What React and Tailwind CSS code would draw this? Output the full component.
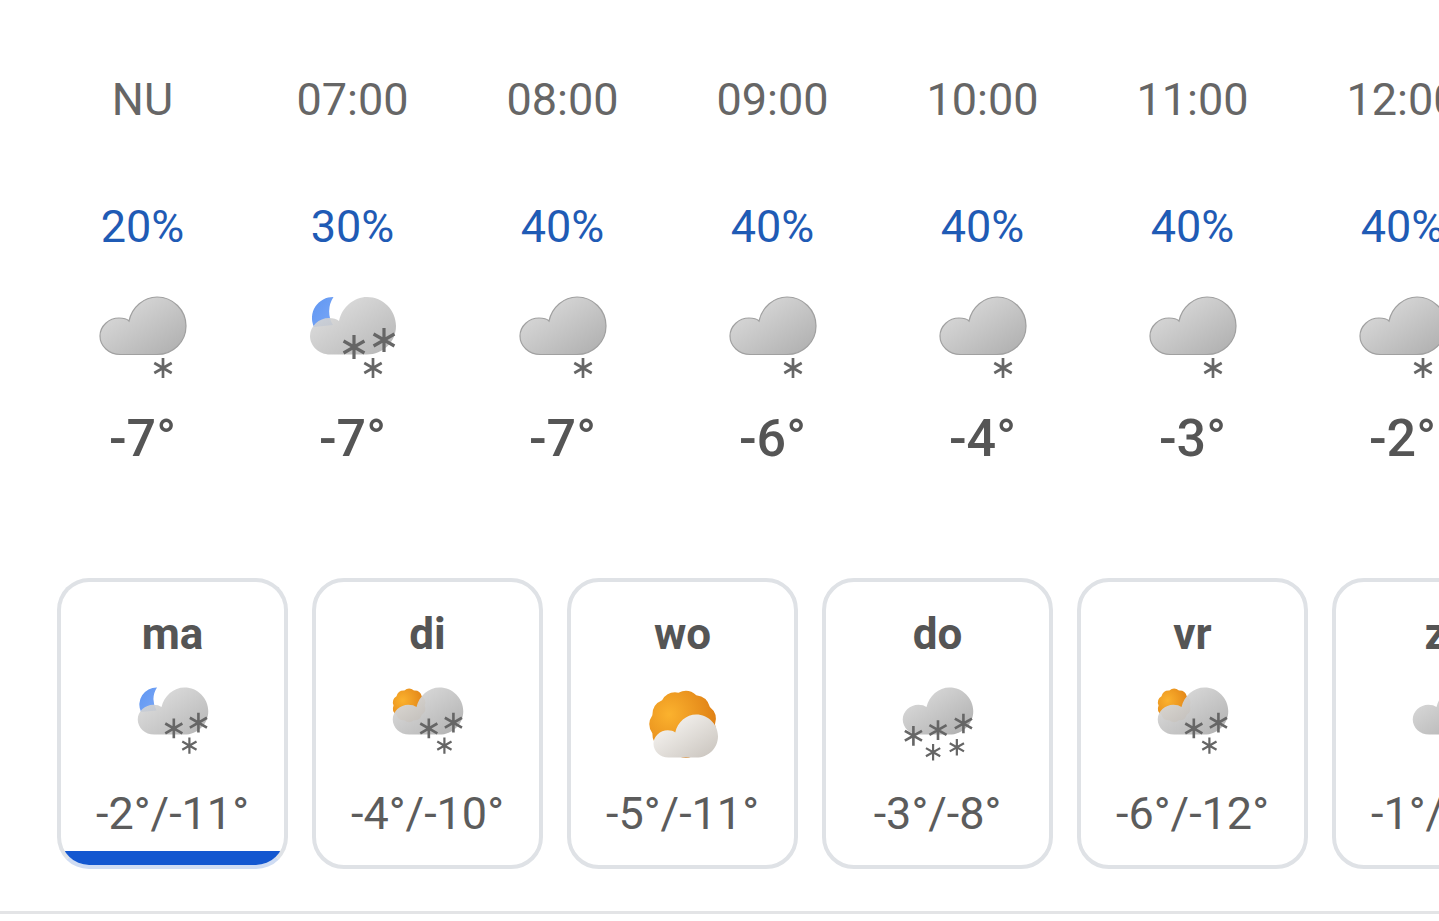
import { useId } from 'react'

const hours = [
  { time: 'NU', rain: '20%', icon: 'snow', temp: '-7°' },
  { time: '07:00', rain: '30%', icon: 'moon', temp: '-7°' },
  { time: '08:00', rain: '40%', icon: 'snow', temp: '-7°' },
  { time: '09:00', rain: '40%', icon: 'snow', temp: '-6°' },
  { time: '10:00', rain: '40%', icon: 'snow', temp: '-4°' },
  { time: '11:00', rain: '40%', icon: 'snow', temp: '-3°' },
  { time: '12:00', rain: '40%', icon: 'snow', temp: '-2°' },
]

const days = [
  { day: 'ma', icon: 'moon', range: '-2°/-11°', active: true },
  { day: 'di', icon: 'sun', range: '-4°/-10°' },
  { day: 'wo', icon: 'clear', range: '-5°/-11°' },
  { day: 'do', icon: 'heavy', range: '-3°/-8°' },
  { day: 'vr', icon: 'sun', range: '-6°/-12°' },
  { day: 'za', icon: 'snow', range: '-1°/-10°' },
]

const CLOUD = 'M20 57.5C9 57.5 0 49 0 39C0 29 9 21 19 21C23 21 27 22 29 24C32 10 44 0 57 0C73 0 86 13 86 29C86 45 73 57.5 57 57.5Z'

const flakes = {
  snow: [[70, 75, 10]],
  moon: [[51, 54, 12], [81, 47, 12], [70, 75, 10]],
  sun: [[51, 54, 12], [81, 47, 12], [70, 75, 10]],
  heavy: [[20, 63, 12], [50, 56, 12], [81, 48, 12], [44, 83, 10], [73, 77, 10]],
  clear: [],
}

// bumpy disc for the sun
function sunPath(cx, cy, r, bump, n) {
  let d = ''
  for (let i = 0; i < n; i++) {
    const a = (i / n) * Math.PI * 2
    const b = ((i + 1) / n) * Math.PI * 2
    const m = (a + b) / 2
    const p = (t, rad) => `${(cx + Math.cos(t) * rad).toFixed(1)} ${(cy + Math.sin(t) * rad).toFixed(1)}`
    if (i === 0) d += `M${p(a, r)}`
    d += `Q${p(m, r + bump)} ${p(b, r)}`
  }
  return d + 'Z'
}

function Flake({ x, y, r }) {
  const dx = r * 0.87
  const dy = r * 0.5
  return (
    <path
      d={`M${x} ${y - r}V${y + r}M${x - dx} ${y - dy}L${x + dx} ${y + dy}M${x + dx} ${y - dy}L${x - dx} ${y + dy}`}
      stroke="#666666"
      strokeWidth={r > 10 ? 3.2 : 2.7}
      fill="none"
    />
  )
}

function WeatherIcon({ kind, outline, className }) {
  const id = useId()
  return (
    <svg viewBox="0 0 100 96" className={className}>
      <defs>
        <linearGradient id={`${id}c`} x1="0.1" y1="0.1" x2="0.9" y2="0.9">
          <stop offset="0" stopColor="#dcdcdc" />
          <stop offset="1" stopColor="#b2b2b2" />
        </linearGradient>
        <linearGradient id={`${id}w`} x1="0.1" y1="0.1" x2="0.9" y2="0.9">
          <stop offset="0" stopColor="#f8f6f3" />
          <stop offset="1" stopColor="#cdc8c2" />
        </linearGradient>
        <linearGradient id={`${id}m`} x1="0" y1="0" x2="1" y2="1">
          <stop offset="0" stopColor="#5f96f2" />
          <stop offset="1" stopColor="#7aa7f6" />
        </linearGradient>
        <radialGradient id={`${id}s`} cx="0.3" cy="0.35" r="0.8">
          <stop offset="0" stopColor="#fbb22e" />
          <stop offset="1" stopColor="#dc7a12" />
        </radialGradient>
      </defs>
      {kind === 'clear' ? (
        <>
          <path d={sunPath(50, 49, 39, 6, 11)} fill={`url(#${id}s)`} />
          <path d={CLOUD} transform="translate(14 37) scale(0.915)" fill={`url(#${id}w)`} />
        </>
      ) : (
        <>
          {kind === 'moon' && (
            <path d="M30.5 4A21 21 0 0 0 11 34L30 32A26 26 0 0 1 30.5 4Z" fill={`url(#${id}m)`} />
          )}
          {kind === 'sun' && <path d={sunPath(27, 26, 19, 4, 10)} fill={`url(#${id}s)`} />}
          <path
            d={CLOUD}
            transform="translate(7 4)"
            fill={`url(#${id}c)`}
            fillOpacity={kind === 'moon' ? 0.9 : kind === 'sun' ? 0.96 : 1}
            stroke={outline ? '#a0a0a0' : 'none'}
            strokeWidth="1.2"
          />
        </>
      )}
      {flakes[kind].map(([x, y, r]) => (
        <Flake key={`${x}-${y}`} x={x} y={y} r={r} />
      ))}
    </svg>
  )
}

function HourColumn({ hour }) {
  return (
    <div className="flex w-[210px] shrink-0 flex-col items-center">
      <div className="text-[45px] leading-[52px] text-[#666666]">{hour.time}</div>
      <div className="mt-[75px] text-[45px] leading-[52px] text-[#1f5bb5]">{hour.rain}</div>
      <WeatherIcon
        kind={hour.icon}
        outline={hour.icon === 'snow'}
        className="mt-[40px] h-[96px] w-[100px]"
      />
      <div className="mt-[22px] text-[52px] leading-[56px] font-medium text-[#555555]">{hour.temp}</div>
    </div>
  )
}

function DayCard({ day }) {
  return (
    <div
      className={`relative h-[291px] w-[231px] shrink-0 overflow-hidden rounded-[32px] border-4 ${
        day.active ? 'border-[#dfe2e6] border-b-[#cfdcf3]' : 'border-[#dfe2e6]'
      }`}
    >
      <div className="flex flex-col items-center pt-[26px]">
        <div className="text-[44px] leading-[52px] font-bold text-[#555555]">{day.day}</div>
        <WeatherIcon kind={day.icon} className="mt-[24px] h-[79px] w-[82px]" />
        <div className="mt-[25px] text-[45px] leading-[52px] whitespace-nowrap text-[#5c5c5c]">{day.range}</div>
      </div>
      {day.active && <div className="absolute inset-x-0 bottom-0 h-[14px] bg-[#1357d0]" />}
    </div>
  )
}

export default function App() {
  return (
    <div className="h-[921px] w-full overflow-hidden bg-white font-['Roboto',sans-serif]">
      <div className="flex pt-[74px] pl-[37.5px]">
        {hours.map((hour) => (
          <HourColumn key={hour.time} hour={hour} />
        ))}
      </div>
      <div className="mt-[111px] flex gap-6 pl-[57px]">
        {days.map((day) => (
          <DayCard key={day.day} day={day} />
        ))}
      </div>
      <div className="mt-[42px] h-[3px] bg-[#e3e4e6]" />
    </div>
  )
}
